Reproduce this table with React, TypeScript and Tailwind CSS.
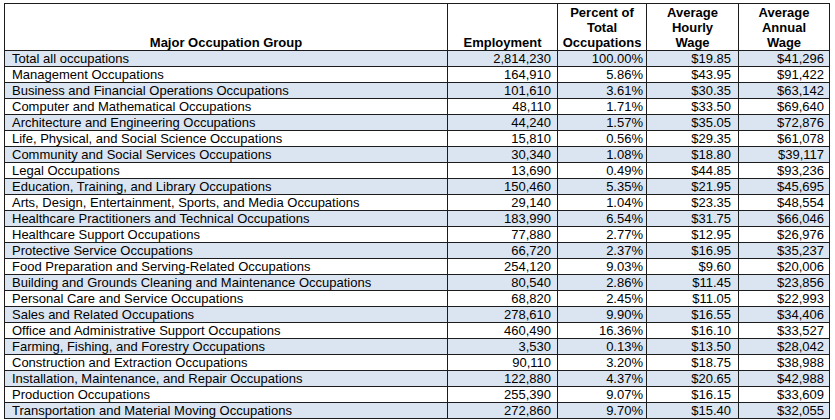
import React from 'react';

type Row = [string, string, string, string, string];

const rows: Row[] = [
  ['Total all occupations', '2,814,230', '100.00%', '$19.85', '$41,296'],
  ['Management Occupations', '164,910', '5.86%', '$43.95', '$91,422'],
  ['Business and Financial Operations Occupations', '101,610', '3.61%', '$30.35', '$63,142'],
  ['Computer and Mathematical Occupations', '48,110', '1.71%', '$33.50', '$69,640'],
  ['Architecture and Engineering Occupations', '44,240', '1.57%', '$35.05', '$72,876'],
  ['Life, Physical, and Social Science Occupations', '15,810', '0.56%', '$29.35', '$61,078'],
  ['Community and Social Services Occupations', '30,340', '1.08%', '$18.80', '$39,117'],
  ['Legal Occupations', '13,690', '0.49%', '$44.85', '$93,236'],
  ['Education, Training, and Library Occupations', '150,460', '5.35%', '$21.95', '$45,695'],
  ['Arts, Design, Entertainment, Sports, and Media Occupations', '29,140', '1.04%', '$23.35', '$48,554'],
  ['Healthcare Practitioners and Technical Occupations', '183,990', '6.54%', '$31.75', '$66,046'],
  ['Healthcare Support Occupations', '77,880', '2.77%', '$12.95', '$26,976'],
  ['Protective Service Occupations', '66,720', '2.37%', '$16.95', '$35,237'],
  ['Food Preparation and Serving-Related Occupations', '254,120', '9.03%', '$9.60', '$20,006'],
  ['Building and Grounds Cleaning and Maintenance Occupations', '80,540', '2.86%', '$11.45', '$23,856'],
  ['Personal Care and Service Occupations', '68,820', '2.45%', '$11.05', '$22,993'],
  ['Sales and Related Occupations', '278,610', '9.90%', '$16.55', '$34,406'],
  ['Office and Administrative Support Occupations', '460,490', '16.36%', '$16.10', '$33,527'],
  ['Farming, Fishing, and Forestry Occupations', '3,530', '0.13%', '$13.50', '$28,042'],
  ['Construction and Extraction Occupations', '90,110', '3.20%', '$18.75', '$38,988'],
  ['Installation, Maintenance, and Repair Occupations', '122,880', '4.37%', '$20.65', '$42,988'],
  ['Production Occupations', '255,390', '9.07%', '$16.15', '$33,609'],
  ['Transportation and Material Moving Occupations', '272,860', '9.70%', '$15.40', '$32,055'],
];

const cell = 'border border-[#1c1c1c] p-0 leading-[15px] h-[16px]';
const head = 'border border-[#1c1c1c] p-0 leading-[15px] font-bold text-center align-bottom';

export default function App() {
  return (
    <div className="w-[835px] h-[420px] bg-white pt-[3px] pl-[4px] font-['Liberation_Sans',Arial,sans-serif] text-[13px] text-black">
      <table className="table-fixed border-collapse w-[825px]">
        <colgroup>
          <col className="w-[443px]" />
          <col className="w-[110px]" />
          <col className="w-[89px]" />
          <col className="w-[92px]" />
          <col className="w-[91px]" />
        </colgroup>
        <thead>
          <tr className="h-[47px]">
            <th className={head}>Major Occupation Group</th>
            <th className={head}>Employment</th>
            <th className={head}>
              Percent of
              <br />
              Total
              <br />
              Occupations
            </th>
            <th className={head}>
              Average
              <br />
              Hourly
              <br />
              Wage
            </th>
            <th className={head}>
              Average
              <br />
              Annual
              <br />
              Wage
            </th>
          </tr>
        </thead>
        <tbody>
          {rows.map((r, i) => (
            <tr key={r[0]} className={i % 2 === 0 ? 'bg-[#dbe5f1]' : 'bg-white'}>
              <td className={`${cell} pl-[7px] whitespace-nowrap`}>{r[0]}</td>
              <td className={`${cell} text-right pr-[6px]`}>{r[1]}</td>
              <td className={`${cell} text-right pr-[3px]`}>{r[2]}</td>
              <td className={`${cell} text-right pr-[7px]`}>{r[3]}</td>
              <td className={`${cell} text-right pr-[5px]`}>{r[4]}</td>
            </tr>
          ))}
        </tbody>
      </table>
    </div>
  );
}
